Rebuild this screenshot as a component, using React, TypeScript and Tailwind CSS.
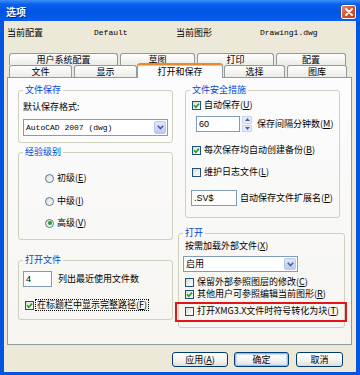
import React from "react";

const cjk = "[font-family:'Noto_Sans_CJK_SC','Noto_Sans_CJK_JP',sans-serif]";
const mono = "[font-family:'Liberation_Mono',monospace] text-[8px]";
const sans = "[font-family:'Liberation_Sans',sans-serif] text-[9px]";

function K({ k }: { k: string }) {
  return (
    <>
      (<span className="underline">{k}</span>)
    </>
  );
}

function Check({ checked }: { checked?: boolean }) {
  return (
    <span className="w-[9px] h-[9px] shrink-0 border border-[#1c5180] bg-[linear-gradient(135deg,#dcdcd7,#ffffff)] flex items-center justify-center">
      {checked && (
        <svg width="7" height="7" viewBox="0 0 7 7">
          <path d="M1 3.3 L2.8 5.2 L6 1.6" stroke="#21a121" strokeWidth="1.6" fill="none" />
        </svg>
      )}
    </span>
  );
}

function Radio({ checked }: { checked?: boolean }) {
  return (
    <span className="w-[9px] h-[9px] shrink-0 rounded-full border border-[#5d7591] bg-[linear-gradient(135deg,#dcdcd7,#ffffff)] flex items-center justify-center">
      {checked && <span className="w-[4px] h-[4px] rounded-full bg-[#21a121]" />}
    </span>
  );
}

function CheckRow({
  checked,
  children,
  className = "",
}: {
  checked?: boolean;
  children: React.ReactNode;
  className?: string;
}) {
  return (
    <div className={`flex items-center h-[12px] ${className}`}>
      <Check checked={checked} />
      <span className="ml-[3px] whitespace-nowrap">{children}</span>
    </div>
  );
}

function RadioRow({
  checked,
  children,
  className = "",
}: {
  checked?: boolean;
  children: React.ReactNode;
  className?: string;
}) {
  return (
    <div className={`flex items-center h-[12px] pl-[26px] ${className}`}>
      <Radio checked={checked} />
      <span className="ml-[3px] whitespace-nowrap">{children}</span>
    </div>
  );
}

function Chevron() {
  return (
    <svg width="7" height="5" viewBox="0 0 7 5">
      <path d="M0.8 0.8 L3.5 3.6 L6.2 0.8" stroke="#4d6185" strokeWidth="1.5" fill="none" />
    </svg>
  );
}

function Combo({ w, h, text, textClass }: { w: string; h: string; text: string; textClass: string }) {
  return (
    <div className={`${w} ${h} border border-[#7f9db9] bg-white flex items-stretch p-[1px]`}>
      <div className={`flex-1 flex items-center pl-[1px] whitespace-nowrap ${textClass}`}>{text}</div>
      <div className="w-[12px] rounded-[2px] border border-[#b9c9ef] bg-[linear-gradient(to_bottom,#dfe7fd,#b9cbf6)] flex items-center justify-center">
        <Chevron />
      </div>
    </div>
  );
}

function Input({ w, text }: { w: string; text: string }) {
  return (
    <div className={`${w} h-[16px] border border-[#7f9db9] bg-white flex items-center pl-[2px] ${sans}`}>{text}</div>
  );
}

function Group({
  title,
  className = "",
  children,
}: {
  title: string;
  className?: string;
  children: React.ReactNode;
}) {
  return (
    <fieldset className={`border border-[#d0d0bf] rounded-[3px] min-w-0 ${className}`}>
      <legend className="ml-[4px] px-[2px] text-[#0046d5] leading-[12px]">{title}</legend>
      {children}
    </fieldset>
  );
}

function Tab({ w, children }: { w: string; children: React.ReactNode }) {
  return (
    <div
      className={`${w} h-[12px] border border-b-0 border-[#919b9c] rounded-t-[3px] bg-[linear-gradient(to_bottom,#ffffff,#ecebe6)] flex items-center justify-center whitespace-nowrap`}
    >
      {children}
    </div>
  );
}

function Btn({ w, children, def }: { w: string; children: React.ReactNode; def?: boolean }) {
  return (
    <div
      className={`${w} h-[15px] rounded-[3px] border border-[#003c74] bg-[linear-gradient(to_bottom,#ffffff,#f3f2ee_60%,#e1ded3)] flex items-center justify-center ${
        def ? "shadow-[inset_0_0_0_1px_#9fbdf0,inset_0_0_0_2px_#cfe0fb]" : ""
      }`}
    >
      {children}
    </div>
  );
}

export default function App() {
  return (
    <div className={`w-[360px] h-[375px] bg-[#0553e1] flex flex-col overflow-hidden ${cjk} text-[9px] leading-[12px] text-black`}>
      {/* Title bar */}
      <div className="h-[21px] shrink-0 flex items-start justify-between pl-[6px] pr-[4px] bg-[linear-gradient(to_bottom,#3d8ff8,#0a60ea_20%,#0054e3_55%,#0a5ced)]">
        <span className="mt-[6px] text-white font-bold text-[10px] leading-[12px] [text-shadow:1px_1px_0_#0a1e74]">选项</span>
        <div className="mt-[5px] w-[15px] h-[14px] rounded-[2px] border border-white bg-[linear-gradient(135deg,#ef8a6c,#d9512b_50%,#c2401f)] flex items-center justify-center">
          <svg width="8" height="8" viewBox="0 0 8 8">
            <path d="M1 1 L7 7 M7 1 L1 7" stroke="white" strokeWidth="1.8" strokeLinecap="round" />
          </svg>
        </div>
      </div>

      {/* Body */}
      <div className="flex-1 mx-[4px] mb-[3px] bg-[#ece9d8] flex flex-col">
        {/* header */}
        <div className="mt-[6px] h-[12px] pl-[3px] flex items-center whitespace-nowrap">
          <span className="w-[87px]">当前配置</span>
          <span className={`w-[82px] ${mono}`}>Default</span>
          <span className="w-[84px]">当前图形</span>
          <span className={mono}>Drawing1.dwg</span>
        </div>

        {/* tabs */}
        <div className="mt-[14px] ml-[3px] w-[345px] flex flex-col">
          <div className="h-[12px] flex pl-[2px] gap-[2px]">
            <Tab w="w-[109px]">用户系统配置</Tab>
            <Tab w="w-[75px]">草图</Tab>
            <Tab w="w-[77px]">打印</Tab>
            <Tab w="w-[70px]">配置</Tab>
          </div>
          <div className="h-[12px] flex items-end pl-[2px]">
            <Tab w="w-[63px]">文件</Tab>
            <div className="w-[2px]" />
            <Tab w="w-[63px]">显示</Tab>
            <div className="relative z-10 -mb-[1px] w-[86px] h-[15px] border-x border-[#919b9c] border-t-[2px] border-t-[#e68b2c] rounded-t-[3px] bg-[#fcfcfe] shadow-[inset_0_1px_0_#ffc83c] flex items-center justify-center whitespace-nowrap">
              打开和保存
            </div>
            <div className="w-[1px]" />
            <Tab w="w-[61px]">选择</Tab>
            <div className="w-[2px]" />
            <Tab w="w-[60px]">图库</Tab>
          </div>

          {/* panel */}
          <div className="h-[268px] border border-[#919b9c] bg-[linear-gradient(to_bottom,#fcfcfe,#f6f5f0)] flex pl-[10px] pt-[6px]">
            {/* left column */}
            <div className="w-[155px] flex flex-col">
              <Group title="文件保存" className="pb-[6px]">
                <div className="mt-[5px] pl-[4px] h-[12px]">默认保存格式:</div>
                <div className="mt-[6px] ml-[4px]">
                  <Combo w="w-[145px]" h="h-[17px]" text="AutoCAD 2007 (dwg)" textClass={mono} />
                </div>
              </Group>

              <Group title="经验级别" className="mt-[3px] pb-[10px]">
                <RadioRow className="mt-[14px]">
                  初级<K k="E" />
                </RadioRow>
                <RadioRow className="mt-[11px]">
                  中级<K k="I" />
                </RadioRow>
                <RadioRow className="mt-[10px]" checked>
                  高级<K k="V" />
                </RadioRow>
              </Group>

              <Group title="打开文件" className="mt-[14px] pb-[8px]">
                <div className="mt-[5px] ml-[4px] flex items-center">
                  <Input w="w-[29px]" text="4" />
                  <span className="ml-[6px] whitespace-nowrap">列出最近使用文件数</span>
                </div>
                <div className="mt-[12px] pl-[6px] flex items-center h-[12px]">
                  <Check checked />
                  <span className="ml-[1px] px-[1px] border border-dotted border-black leading-[10px] whitespace-nowrap">
                    在标题栏中显示完整路径<K k="F" />
                  </span>
                </div>
              </Group>
            </div>

            {/* right column */}
            <div className="ml-[5px] w-[167px] flex flex-col">
              <Group title="文件安全措施" className="ml-[7px] w-[155px] pb-[11px]">
                <CheckRow checked className="mt-[3px] pl-[6px]">
                  自动保存<K k="U" />
                </CheckRow>
                <div className="mt-[5px] ml-[10px] flex items-center">
                  <Input w="w-[44px]" text="60" />
                  <div className="ml-[2px] w-[10px] h-[16px] flex flex-col gap-[1px]">
                    <div className="flex-1 rounded-[1px] border border-[#c3d1f3] bg-[#e4ebfd] flex items-center justify-center">
                      <svg width="5" height="3" viewBox="0 0 5 3">
                        <path d="M0 3 L2.5 0 L5 3 Z" fill="#4d6185" />
                      </svg>
                    </div>
                    <div className="flex-1 rounded-[1px] border border-[#c3d1f3] bg-[#e4ebfd] flex items-center justify-center">
                      <svg width="5" height="3" viewBox="0 0 5 3">
                        <path d="M0 0 L2.5 3 L5 0 Z" fill="#4d6185" />
                      </svg>
                    </div>
                  </div>
                  <span className="ml-[5px] whitespace-nowrap">
                    保存间隔分钟数<K k="M" />
                  </span>
                </div>
                <CheckRow checked className="mt-[12px] pl-[6px]">
                  每次保存均自动创建备份<K k="B" />
                </CheckRow>
                <CheckRow className="mt-[10px] pl-[6px]">
                  维护日志文件<K k="L" />
                </CheckRow>
                <div className="mt-[12px] ml-[5px] flex items-center">
                  <Input w="w-[46px]" text=".SV$" />
                  <span className="ml-[3px] whitespace-nowrap">
                    自动保存文件扩展名<K k="P" />
                  </span>
                </div>
              </Group>

              <Group title="打开" className="mt-[9px] pb-[10px]">
                <div className="mt-[1px] pl-[6px] h-[12px] whitespace-nowrap">
                  按需加载外部文件<K k="X" />
                </div>
                <div className="mt-[4px] ml-[4px]">
                  <Combo w="w-[115px]" h="h-[16px]" text="启用" textClass="" />
                </div>
                <CheckRow className="mt-[4px] pl-[6px]">
                  保留外部参照图层的修改<K k="C" />
                </CheckRow>
                <CheckRow checked className="pl-[6px]">
                  其他用户可参照编辑当前图形<K k="R" />
                </CheckRow>
                <div className="relative mt-[5px]">
                  <CheckRow className="pl-[6px]">
                    打开XMG3.X文件时符号转化为块<K k="T" />
                  </CheckRow>
                  <div className="absolute left-[-4px] top-[-3px] w-[172px] h-[20px] border-2 border-[#e2141c]" />
                </div>
              </Group>
            </div>
          </div>
        </div>

        {/* buttons */}
        <div className="mt-[7px] flex justify-end pr-[13px]">
          <Btn w="w-[56px]">
            应用<K k="A" />
          </Btn>
          <div className="w-[6px]" />
          <Btn w="w-[55px]" def>
            确定
          </Btn>
          <div className="w-[7px]" />
          <Btn w="w-[47px]">取消</Btn>
        </div>
      </div>
    </div>
  );
}
